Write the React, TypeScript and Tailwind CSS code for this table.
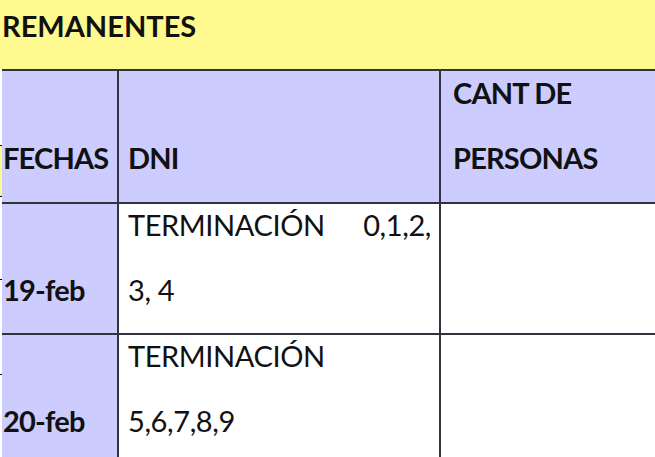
const rows = [
  { date: "19-feb", lines: ["TERMINACIÓN 0,1,2,", "3, 4"], justifyFirst: true },
  { date: "20-feb", lines: ["TERMINACIÓN", "5,6,7,8,9"], justifyFirst: false },
];

function Cell({
  children,
  className = "",
}: {
  children: React.ReactNode;
  className?: string;
}) {
  return (
    <div className={`flex h-full min-h-0 flex-col justify-end pb-[11px] leading-[65px] ${className}`}>{children}</div>
  );
}

export default function App() {
  return (
    <div className="h-[457px] w-[655px] overflow-hidden bg-white font-['Lato','Liberation_Sans',sans-serif] text-[29px] text-[#111]">
      {/* title band */}
      <div className="h-[69px] bg-[#fffa8f] pl-[2px] pt-[8px] text-[29px] leading-[35px] font-bold">REMANENTES</div>

      <div className="flex">
        {/* scrap of the sheet behind */}
        <div className="flex w-[2px] shrink-0 flex-col bg-white">
          <div className="h-[76px]" />
          <div className="h-[1px] bg-black" />
          <div className="h-[50px] bg-[#fffa8f]" />
          <div className="h-[1px] bg-black" />
          <div className="h-[82px]" />
          <div className="h-[1px] bg-black" />
          <div className="h-[94px]" />
          <div className="h-[1px] bg-black" />
        </div>

        <div className="min-w-0 flex-1 border-t-2 border-[#33333f]">
          {/* header row */}
          <div className="grid h-[133px] grid-cols-[115px_322px_1fr] grid-rows-[131px] border-b-2 border-[#33333f] bg-[#ccccff] font-bold tracking-[-0.8px]">
            <Cell className="pl-[1px] pb-[12px]">FECHAS</Cell>
            <Cell className="border-l-2 border-[#33333f] pl-[9px] pb-[12px]">DNI</Cell>
            <Cell className="border-l-2 border-[#33333f] pl-[12px] pb-[12px]">
              <div>CANT DE</div>
              <div>PERSONAS</div>
            </Cell>
          </div>

          {rows.map((r) => (
            <div
              key={r.date}
              className="grid h-[131px] grid-cols-[115px_322px_1fr] grid-rows-[129px] border-b-2 border-[#33333f]"
            >
              <Cell className="bg-[#ccccff] pl-[1px] font-bold tracking-[-0.8px]">{r.date}</Cell>
              <Cell className="border-l-2 border-[#33333f] pl-[9px] pr-[8px] tracking-[-0.4px]">
                <div className={r.justifyFirst ? "text-justify [text-align-last:justify]" : ""}>{r.lines[0]}</div>
                <div>{r.lines[1]}</div>
              </Cell>
              <Cell className="border-l-2 border-[#33333f]">{""}</Cell>
            </div>
          ))}
        </div>
      </div>
    </div>
  );
}
